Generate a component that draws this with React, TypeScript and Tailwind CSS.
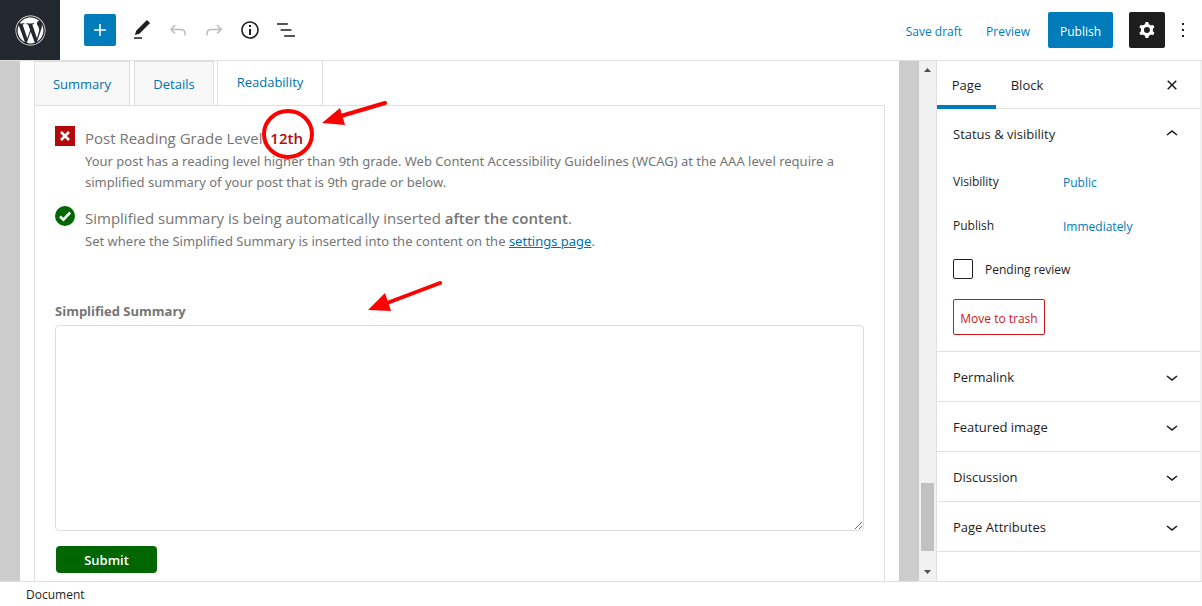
import type { ReactNode } from "react";
import { FaWordpress } from "react-icons/fa";

const icons = {
  plus: "M18 11.2h-5.2V6h-1.6v5.2H6v1.6h5.2V18h1.6v-5.2H18z",
  edit: "M20.1 5.1L16.9 2 6.2 12.7l-1.3 4.4 4.5-1.3L20.1 5.1zM4 20.8h8v-1.5H4v1.5z",
  undo: "M18.3 11.7c-.6-.6-1.4-.9-2.3-.9H6.7l2.9-3.3-1.1-1-4.5 5L8.5 16l1-1-2.7-2.7H16c.5 0 .9.2 1.3.5 1 1 1 3.4 1 4.5v.3h1.5v-.2c0-1.5 0-4.3-1.5-5.7z",
  redo: "M15.6 6.5l-1.1 1 2.9 3.3H8c-.9 0-1.7.3-2.3.9-1.4 1.5-1.4 4.2-1.4 5.6v.2h1.5v-.3c0-1.1 0-3.5 1-4.5.3-.3.7-.5 1.3-.5h9.2L14.5 15l1.1 1.1 4.6-4.6-4.6-5z",
  info: "M12 3.2c-4.8 0-8.8 3.9-8.8 8.8 0 4.8 3.9 8.8 8.8 8.8 4.8 0 8.8-3.9 8.8-8.8 0-4.8-4-8.8-8.8-8.8zm0 16c-4 0-7.2-3.3-7.2-7.2C4.8 8 8 4.8 12 4.8s7.2 3.3 7.2 7.2c0 4-3.2 7.2-7.2 7.2zM11 17h2v-6h-2v6zm0-8h2V7h-2v2z",
  list: "M13.8 5.2H3v1.5h10.8V5.2zm-3.6 12v1.5H21v-1.5H10.2zm7.2-6H6.6v1.5h10.8v-1.5z",
  cog: "M10.289 4.836A1 1 0 0111.275 4h1.306a1 1 0 01.987.836l.244 1.466c.787.26 1.503.679 2.108 1.218l1.393-.522a1 1 0 011.216.437l.653 1.13a1 1 0 01-.23 1.273l-1.148.944a6.025 6.025 0 010 2.435l1.149.946a1 1 0 01.23 1.272l-.653 1.13a1 1 0 01-1.216.437l-1.394-.522c-.605.54-1.32.958-2.108 1.218l-.244 1.466a1 1 0 01-.987.836h-1.306a1 1 0 01-.986-.836l-.244-1.466a5.995 5.995 0 01-2.108-1.218l-1.394.522a1 1 0 01-1.217-.436l-.653-1.131a1 1 0 01.23-1.272l1.149-.946a6.026 6.026 0 010-2.435l-1.148-.944a1 1 0 01-.23-1.272l.653-1.131a1 1 0 011.217-.437l1.393.522a5.994 5.994 0 012.108-1.218l.244-1.466zM14.929 12a3 3 0 11-6 0 3 3 0 016 0z",
  more: "M13 19h-2v-2h2v2zm0-6h-2v-2h2v2zm0-6h-2V5h2v2z",
  down: "M17.5 11.6L12 16l-5.5-4.4.9-1.2L12 14l4.5-3.6 1 1.2z",
  up: "M6.5 12.4L12 8l5.5 4.4-.9 1.2L12 10l-4.5 3.6-1-1.2z",
  close:
    "M12 13.06l3.712 3.713 1.061-1.06L13.061 12l3.712-3.712-1.06-1.06L12 10.938 8.288 7.227l-1.061 1.06L10.939 12l-3.712 3.712 1.06 1.061L12 13.061z",
};

function Icon({ name }: { name: keyof typeof icons }) {
  return (
    <svg className="h-6 w-6 shrink-0" viewBox="0 0 24 24" fill="currentColor" aria-hidden="true">
      <path fillRule="evenodd" clipRule="evenodd" d={icons[name]} />
    </svg>
  );
}

function ToolButton({ name, label, disabled }: { name: keyof typeof icons; label: string; disabled?: boolean }) {
  return (
    <button
      type="button"
      aria-label={label}
      disabled={disabled}
      className="flex h-9 w-9 items-center justify-center disabled:text-[#bbbbbb]"
    >
      <Icon name={name} />
    </button>
  );
}

function Header() {
  return (
    <header className="flex h-[61px] shrink-0 items-center border-b border-[#e0e0e0] bg-white">
      <a
        href="#"
        aria-label="View pages"
        className="flex h-[60px] w-[60px] items-center justify-center bg-[#23282e] text-white"
      >
        <FaWordpress size={31} />
      </a>
      <div className="ml-6 flex flex-1 items-center">
        <button
          type="button"
          aria-label="Add block"
          className="mr-2 flex h-8 w-8 items-center justify-center rounded-xs bg-[#007cba] text-white"
        >
          <Icon name="plus" />
        </button>
        <ToolButton name="edit" label="Tools" />
        <ToolButton name="undo" label="Undo" disabled />
        <ToolButton name="redo" label="Redo" disabled />
        <ToolButton name="info" label="Details" />
        <ToolButton name="list" label="List view" />
      </div>
      <div className="flex items-center text-xs text-[#007cba]">
        <button type="button" className="mr-6 pt-1">
          Save draft
        </button>
        <button type="button" className="mr-[18px] pt-1">
          Preview
        </button>
        <button type="button" className="mr-4 h-9 w-[65px] rounded-xs bg-[#007cba] pt-1 text-white">
          Publish
        </button>
        <button
          type="button"
          aria-label="Settings"
          className="flex h-9 w-9 items-center justify-center rounded-xs bg-[#1e1e1e] text-white"
        >
          <Icon name="cog" />
        </button>
        <button type="button" aria-label="Options" className="mr-[7px] ml-1.5 text-[#1e1e1e]">
          <Icon name="more" />
        </button>
      </div>
    </header>
  );
}

function Annotations() {
  return (
    <svg
      className="pointer-events-none absolute top-0 left-0"
      width="460"
      height="260"
      viewBox="20 61 460 260"
      fill="none"
      stroke="#ff0000"
      aria-hidden="true"
    >
      <ellipse cx="288" cy="134" rx="24" ry="23" strokeWidth="4" />
      <path d="M385 103L341 116M440 283L387 303" strokeWidth="4" strokeLinecap="round" />
      <path d="M322 123l18-15 5 17zM368 310l17-17 6 18z" fill="#ff0000" stroke="none" />
    </svg>
  );
}

function Notice({ icon, title, children }: { icon: ReactNode; title: ReactNode; children: ReactNode }) {
  return (
    <li className="flex gap-2.5">
      <div>{icon}</div>
      <div>
        <p className="pb-px text-[15px] leading-6">{title}</p>
        <p className="font-['Noto_Sans','Open_Sans',sans-serif] leading-[21px]">{children}</p>
      </div>
    </li>
  );
}

function MetaBox() {
  return (
    <div className="relative min-w-0 flex-1 overflow-hidden bg-white px-3.5 text-[#757575]">
      <div role="tablist" className="relative z-10 flex h-11 text-[#0073aa]">
        <button type="button" role="tab" className="mr-1 w-24 border border-b-0 border-[#dfdfdf] bg-[#f8f8f8] pt-0.5">
          Summary
        </button>
        <button type="button" role="tab" className="mr-[3px] w-20 border border-b-0 border-[#dfdfdf] bg-[#f8f8f8] pt-0.5">
          Details
        </button>
        <button type="button" role="tab" aria-selected="true" className="w-[106px] border-x border-[#dfdfdf] bg-white">
          Readability
        </button>
      </div>
      <div className="h-full border border-[#dfdfdf] px-5 pt-5">
        <ul className="flex flex-col gap-[13px]">
          <Notice
            icon={
              <svg width="20" height="20" viewBox="0 0 20 20" aria-hidden="true">
                <path fill="#b3090d" d="M0 0h20v20H0z" />
                <path d="M6 6l8 8M14 6l-8 8" stroke="#fff" strokeWidth="2.6" />
              </svg>
            }
            title={
              <>
                Post Reading Grade Level: <strong className="font-semibold text-[#b3090d]">12th</strong>
              </>
            }
          >
            Your post has a reading level higher than 9th grade. Web Content Accessibility Guidelines (WCAG) at the AAA
            level require a simplified summary of your post that is 9th grade or below.
          </Notice>
          <Notice
            icon={
              <svg width="20" height="20" viewBox="0 0 20 20" aria-hidden="true">
                <circle cx="10" cy="10" r="10" fill="#006600" />
                <path d="M5 10.5l3.4 3.2L15.2 6.5" fill="none" stroke="#fff" strokeWidth="2.6" />
              </svg>
            }
            title={
              <>
                Simplified summary is being automatically inserted <strong className="font-semibold">after the content</strong>.
              </>
            }
          >
            Set where the Simplified Summary is inserted into the content on the{" "}
            <a href="#" className="text-[#0073aa] underline">
              settings page
            </a>
            .
          </Notice>
        </ul>
        <form className="mt-[47px]">
          <label htmlFor="summary" className="block leading-6 font-bold">
            Simplified Summary
          </label>
          <textarea id="summary" className="mt-0.5 block h-[206px] w-full rounded-sm border border-[#dddddd] bg-white" />
          <button type="button" className="mt-[15px] ml-px h-[27px] w-[101px] rounded bg-[#006600] pt-0.5 font-semibold text-white">
            Submit
          </button>
        </form>
      </div>
      <Annotations />
    </div>
  );
}

function Scrollbar() {
  return (
    <div className="flex w-[17px] flex-col items-center bg-[#f1f1f1]" aria-hidden="true">
      <svg width="17" height="17" viewBox="0 0 17 17" fill="#505050">
        <path d="M5 11h7L8.500 7z" />
      </svg>
      <div className="flex-1" />
      <div className="h-[68px] w-[13px] bg-[#c1c1c1]" />
      <svg className="mt-[13px]" width="17" height="17" viewBox="0 0 17 17" fill="#505050">
        <path d="M5 6h7L8.500 10z" />
      </svg>
    </div>
  );
}

function PanelTitle({ title, open }: { title: string; open?: boolean }) {
  return (
    <h2>
      <button
        type="button"
        aria-expanded={open ?? false}
        className="flex h-[49px] w-full items-center justify-between px-4 text-[13px] font-medium"
      >
        <span className="pt-0.5">{title}</span>
        <Icon name={open ? "up" : "down"} />
      </button>
    </h2>
  );
}

function Sidebar() {
  const panels = ["Permalink", "Featured image", "Discussion", "Page Attributes"];
  return (
    <aside className="w-[264px] shrink-0 overflow-hidden border-l border-[#e0e0e0] bg-white text-xs">
      <div className="flex h-12 items-stretch border-b border-[#e0e0e0] text-[13px] font-medium">
        <button type="button" className="-mb-px w-[59px] border-b-4 border-[#007cba] pt-[5px]">
          Page
        </button>
        <button type="button" className="w-[62px] pt-0.5">
          Block
        </button>
        <button type="button" aria-label="Close settings" className="mr-4 ml-auto">
          <Icon name="close" />
        </button>
      </div>
      <section className="h-[243px] border-b border-[#e0e0e0]">
        <PanelTitle title="Status & visibility" open />
        <div className="px-4 pt-px">
          <div className="flex h-11 items-center">
            <span className="w-[110px] pt-px">Visibility</span>
            <button type="button" className="pt-[3px] text-[#007cba]">
              Public
            </button>
          </div>
          <div className="flex h-11 items-center">
            <span className="w-[110px] pt-px">Publish</span>
            <button type="button" className="pt-[3px] text-[#007cba]">
              Immediately
            </button>
          </div>
          <label className="flex h-11 items-center gap-3">
            <input type="checkbox" className="h-5 w-5 appearance-none rounded-xs border border-[#1e1e1e]" />
            <span className="pt-px">Pending review</span>
          </label>
          <button type="button" className="mt-2 h-9 w-[92px] rounded-xs border border-[#cc1818] pt-1 text-[#cc1818]">
            Move to trash
          </button>
        </div>
      </section>
      {panels.map((title) => (
        <section key={title} className="border-b border-[#e0e0e0]">
          <PanelTitle title={title} />
        </section>
      ))}
    </aside>
  );
}

export default function App() {
  return (
    <div className="flex h-screen flex-col bg-white font-['Open_Sans','Noto_Sans',sans-serif] text-[13px] text-[#1e1e1e]">
      <Header />
      <div className="flex min-h-0 flex-1 bg-[#f0f0f0] pr-0.5">
        <main className="flex min-w-0 flex-1 bg-[#cccccc] pl-5">
          <MetaBox />
          <div className="w-5" />
          <Scrollbar />
        </main>
        <Sidebar />
      </div>
      <footer className="flex h-[25px] shrink-0 items-center border-t border-[#e0e0e0] pt-0.5 pl-[26px] text-xs">
        Document
      </footer>
    </div>
  );
}
